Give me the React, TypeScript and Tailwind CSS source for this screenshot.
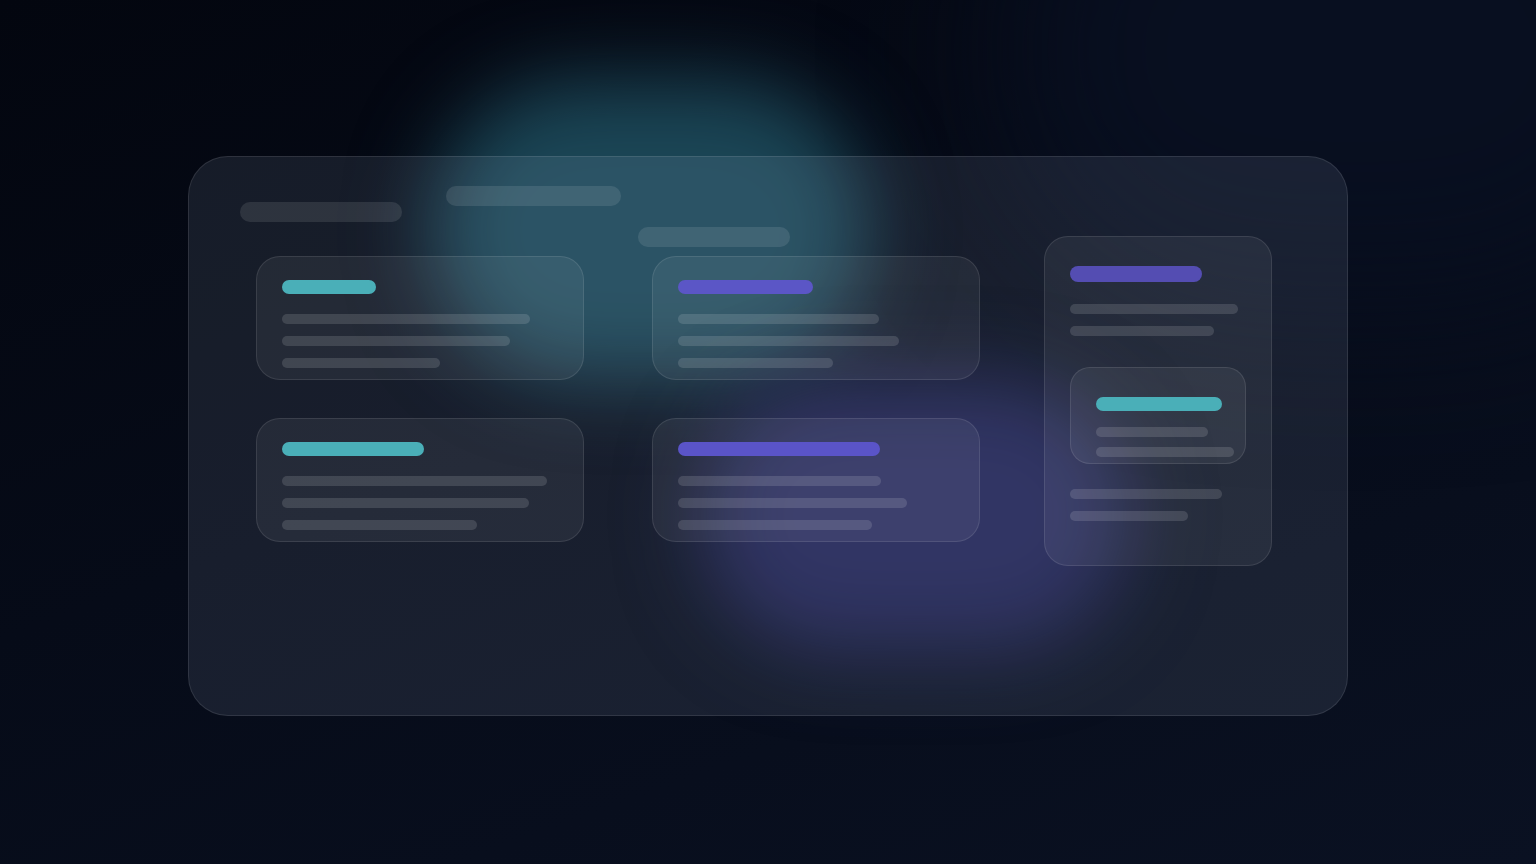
import React from 'react'

// skeleton line helper
const Line = ({ w, h = 10, tone = 'bg-white/[0.13]' }: { w: number; h?: number; tone?: string }) => (
  <div className={`rounded-full ${tone}`} style={{ width: w, height: h }} />
)

interface CardSpec {
  accent: string
  accentW: number
  lines: number[]
}

const cards: CardSpec[] = [
  { accent: 'bg-[#4aafb8]', accentW: 94, lines: [248, 228, 158] },
  { accent: 'bg-[#5b56c6]', accentW: 135, lines: [201, 221, 155] },
  { accent: 'bg-[#4aafb8]', accentW: 142, lines: [265, 247, 195] },
  { accent: 'bg-[#5a54c8]', accentW: 202, lines: [203, 229, 194] },
]

function Card({ spec }: { spec: CardSpec }) {
  return (
    <div className="w-[328px] h-[124px] rounded-[24px] border border-white/10 bg-white/[0.06] pl-[25px] pt-[23px]">
      <Line w={spec.accentW} h={14} tone={spec.accent} />
      <div className="mt-[20px] flex flex-col gap-[12px]">
        {spec.lines.map((w, i) => (
          <Line key={i} w={w} />
        ))}
      </div>
    </div>
  )
}

export default function App() {
  return (
    <div className="relative h-screen w-full overflow-hidden bg-[linear-gradient(160deg,#03060f_0%,#060b18_45%,#0a1122_100%)]">
      {/* background glows */}
      <div className="absolute left-[1000px] top-[-200px] h-[500px] w-[700px] rounded-full bg-[#080f20] blur-[80px]" />
      <div className="absolute left-[430px] top-[80px] h-[300px] w-[440px] rounded-full bg-[#1b4656] blur-[40px]" />
      <div className="absolute left-[700px] top-[380px] h-[270px] w-[430px] rounded-full bg-[#222455] blur-[40px]" />

      <div className="relative flex h-full items-center justify-center pt-2">
        <div className="h-[560px] w-[1160px] rounded-[40px] border border-white/10 bg-[rgba(190,205,235,0.1)]">
          {/* header pills */}
          <div className="flex h-[99px] items-start">
            <div className="ml-[51px] mt-[45px] h-[20px] w-[162px] rounded-full bg-white/[0.1]" />
            <div className="ml-[44px] mt-[29px] h-[20px] w-[175px] rounded-full bg-white/[0.1]" />
            <div className="ml-[17px] mt-[70px] h-[20px] w-[152px] rounded-full bg-white/[0.1]" />
          </div>

          <div className="flex items-start pl-[67px]">
            <div className="grid grid-cols-[328px_328px] gap-x-[68px] gap-y-[38px]">
              {cards.map((c, i) => (
                <Card key={i} spec={c} />
              ))}
            </div>

            {/* side panel */}
            <div className="-mt-[20px] ml-[64px] h-[330px] w-[228px] rounded-[24px] border border-white/10 bg-white/[0.06] pl-[25px] pt-[29px]">
              <Line w={132} h={16} tone="bg-[#544db2]" />
              <div className="mt-[22px] flex flex-col gap-[12px]">
                <Line w={168} />
                <Line w={144} />
              </div>

              <div className="mt-[31px] h-[97px] w-[176px] rounded-[20px] border border-white/10 bg-white/[0.06] pl-[25px] pt-[29px]">
                <Line w={126} h={14} tone="bg-[#4aafb8]" />
                <div className="mt-[16px] flex flex-col gap-[10px]">
                  <Line w={112} />
                  <Line w={138} />
                </div>
              </div>

              <div className="mt-[25px] flex flex-col gap-[12px]">
                <Line w={152} />
                <Line w={118} />
              </div>
            </div>
          </div>
        </div>
      </div>
    </div>
  )
}
